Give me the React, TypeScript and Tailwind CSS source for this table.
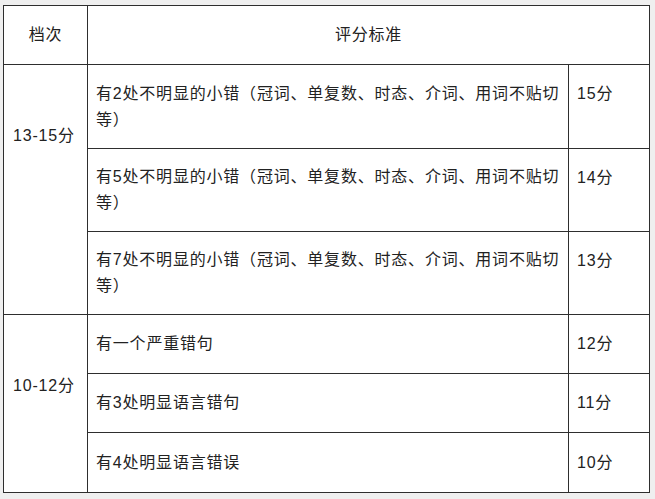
import React from "react";

const font = {
  fontFamily: '"Liberation Sans", "Noto Sans CJK SC", sans-serif',
};

const mistakes = (n: string) => (
  <>
    有{n}处不明显的小错（冠词、单复数、时态、介词、用词不贴切
    <br />
    等）
  </>
);

export default function App() {
  const cell = "border-r border-b border-[#2e2e2e] bg-white";
  return (
    <div
      className="w-[655px] h-[499px] bg-[#efefef] pt-[5px] pl-[3px] text-[16px] leading-[26px] tracking-[0.8px] text-[#222222]"
      style={font}
    >
      <div className="grid w-[647px] grid-cols-[84px_481px_81px] grid-rows-[59px_84px_83px_83px_59px_59px_60px] border-l border-t border-[#2e2e2e]">
        <div className={`${cell} flex items-center justify-center`}>档次</div>
        <div className={`${cell} col-span-2 flex items-center justify-center`}>评分标准</div>

        <div className={`${cell} row-span-3 pl-[9px] pt-[58px]`}>13-15分</div>
        <div className={`${cell} flex items-center pl-[8px] whitespace-nowrap`}>
          <div>{mistakes("2")}</div>
        </div>
        <div className={`${cell} pl-[8px] pt-[16px]`}>15分</div>

        <div className={`${cell} flex items-center pl-[8px] whitespace-nowrap`}>
          <div>{mistakes("5")}</div>
        </div>
        <div className={`${cell} pl-[8px] pt-[16px]`}>14分</div>

        <div className={`${cell} flex items-center pl-[8px] whitespace-nowrap`}>
          <div>{mistakes("7")}</div>
        </div>
        <div className={`${cell} pl-[8px] pt-[16px]`}>13分</div>

        <div className={`${cell} row-span-3 pl-[9px] pt-[58px]`}>10-12分</div>
        <div className={`${cell} flex items-center pl-[8px]`}>有一个严重错句</div>
        <div className={`${cell} flex items-center pl-[8px]`}>12分</div>

        <div className={`${cell} flex items-center pl-[8px]`}>有3处明显语言错句</div>
        <div className={`${cell} flex items-center pl-[8px]`}>11分</div>

        <div className={`${cell} flex items-center pl-[8px]`}>有4处明显语言错误</div>
        <div className={`${cell} flex items-center pl-[8px]`}>10分</div>
      </div>
    </div>
  );
}
